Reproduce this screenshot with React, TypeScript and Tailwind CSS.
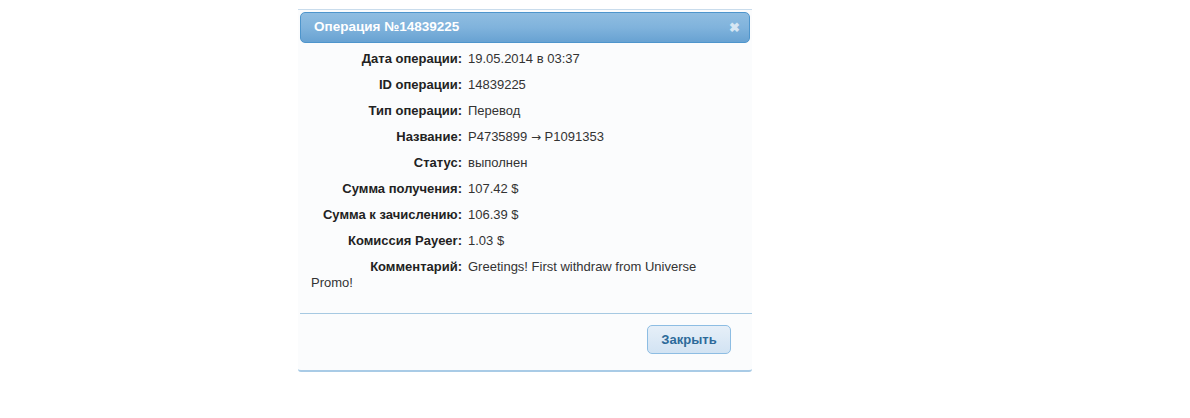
const rows: [string, React.ReactNode][] = [
  ["Дата операции:", "19.05.2014 в 03:37"],
  ["ID операции:", "14839225"],
  ["Тип операции:", "Перевод"],
  [
    "Название:",
    <>
      P4735899 <span className="font-['DejaVu_Sans',sans-serif] text-[12px]">→</span> P1091353
    </>,
  ],
  ["Статус:", "выполнен"],
  ["Сумма получения:", "107.42 $"],
  ["Сумма к зачислению:", "106.39 $"],
  ["Комиссия Payeer:", "1.03 $"],
  ["Комментарий:", "Greetings! First withdraw from Universe Promo!"],
];

export default function App() {
  return (
    <div className="min-h-screen bg-white pt-[9px] pl-[298px] font-['Liberation_Sans',Arial,sans-serif]">
      <div className="w-[454px] bg-[#fbfcfd] border-t border-[#c9dcec] border-b-2 border-b-[#a9cbe6] rounded-b-[3px]">
        {/* header */}
        <div className="mx-[2px] mt-[2px] h-[31px] rounded-[5px] border border-[#4e95cc] bg-gradient-to-b from-[#8fbde1] via-[#80b3dc] to-[#68a2d2] flex items-center justify-between pl-[13px] pr-[9px]">
          <span className="text-white font-bold text-[13.5px]">Операция №14839225</span>
          <span className="text-[#d6e6f3] font-bold text-[13px] leading-none">✖</span>
        </div>

        {/* body */}
        <div className="pl-[13px] pr-[32px] pt-[8px] pb-[22px] text-[13px] leading-[16px] text-[#222]">
          {rows.map(([label, value]) => (
            <div key={label} className="mb-[10px] last:mb-0">
              <span className="inline-block w-[151px] text-right font-bold text-[#222]">{label}</span>
              <span className="ml-[6px] text-[#333]">{value}</span>
            </div>
          ))}
        </div>

        {/* footer */}
        <div className="ml-[2px] border-t border-[#a6c9e2] flex justify-end pt-[11px] pb-[16px] pr-[21px]">
          <button className="w-[84px] h-[29px] rounded-[5px] border border-[#8dbde3] bg-gradient-to-b from-[#e6eff8] to-[#d2e3f3] text-[13px] font-bold text-[#2d6a9a]">
            Закрыть
          </button>
        </div>
      </div>
    </div>
  );
}
